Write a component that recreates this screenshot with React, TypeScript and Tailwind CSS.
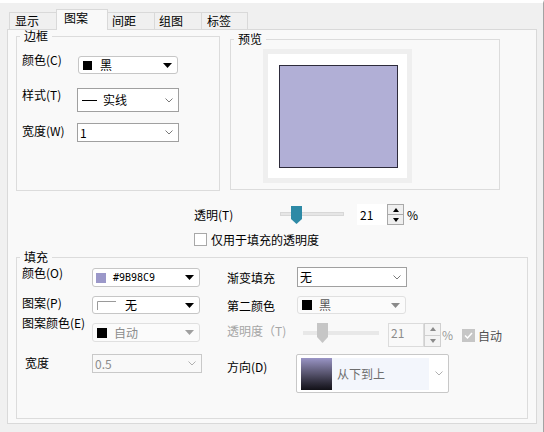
import type { ReactNode } from "react";

const Tri = ({ c = "#000" }: { c?: string }) => (
  <svg width="9" height="5" viewBox="0 0 9 5">
    <path d="M0 0H9L4.5 5Z" fill={c} />
  </svg>
);

const Chev = ({ c = "#7a7a7a" }: { c?: string }) => (
  <svg width="8" height="5" viewBox="0 0 8 5">
    <path d="M0.5 0.5L4 4L7.5 0.5" fill="none" stroke={c} />
  </svg>
);

function Group({ label, className, children }: { label: string; className: string; children?: ReactNode }) {
  return (
    <fieldset className={`border border-[#dcdcdc] ${className}`}>
      <legend className="ml-[3px] px-[4px] leading-[12px]">{label}</legend>
      {children}
    </fieldset>
  );
}

function Spinner({ disabled }: { disabled?: boolean }) {
  const c = disabled ? "#8a8a8a" : "#000";
  const btn = disabled
    ? "flex-1 flex items-center justify-center border border-[#d0d0d0] bg-[#f4f4f4]"
    : "flex-1 flex items-center justify-center border border-[#a9a9a9] bg-[#efefef]";
  return (
    <div className="w-[17px] h-full flex flex-col">
      <div className={btn}>
        <svg width="6" height="4" viewBox="0 0 6 4">
          <path d="M0 4H6L3 0Z" fill={c} />
        </svg>
      </div>
      <div className={`${btn} -mt-px`}>
        <svg width="6" height="4" viewBox="0 0 6 4">
          <path d="M0 0H6L3 4Z" fill={c} />
        </svg>
      </div>
    </div>
  );
}

export default function App() {
  return (
    <div className="w-[544px] h-[432px] overflow-hidden bg-[#f0f0f0] border-t-[3px] border-t-white border-r border-r-[#a3a3a3] font-['Noto_Sans_CJK_SC',sans-serif] text-[12px] leading-[12px] text-black">
      {/* tabs */}
      <div className="flex items-end ml-[9px] mt-[6px] h-[21px] -mb-px">
        <div className="w-[48px] h-[17px] mb-px border-t border-x border-[#d9d9d9] pl-[5px] pt-[2px]">显示</div>
        <div className="relative z-10 -ml-px w-[52px] h-[21px] border-t border-x border-[#d9d9d9] bg-[#f9f9f9] pl-[7px] pt-[2px]">图案</div>
        <div className="-ml-px w-[48px] h-[17px] mb-px border-t border-x border-[#d9d9d9] pl-[4px] pt-[2px]">间距</div>
        <div className="-ml-px w-[48px] h-[17px] mb-px border-t border-x border-[#d9d9d9] pl-[4px] pt-[2px]">组图</div>
        <div className="-ml-px w-[47px] h-[17px] mb-px border-t border-x border-[#d9d9d9] pl-[5px] pt-[2px]">标签</div>
      </div>

      {/* panel */}
      <div className="ml-[7px] w-[530px] h-[395px] border border-[#d9d9d9] bg-[#f9f9f9]">
        <div className="flex items-start">
          <Group label="边框" className="ml-[8px] w-[204px] h-[161px]">
            <div className="flex flex-col pl-[5px]">
              <div className="mt-[14px] flex items-start">
                <span className="w-[56px] -mt-[2px]">颜色(C)</span>
                <div className="w-[100px] h-[18px] flex items-center border border-[#c6c6c6] rounded-[3px] bg-white">
                  <span className="ml-[4px] w-[9px] h-[9px] bg-black" />
                  <span className="ml-[8px]">黑</span>
                  <span className="ml-auto mr-[5px] flex"><Tri /></span>
                </div>
              </div>
              <div className="mt-[14px] flex items-start">
                <span className="w-[55px] mt-[1px]">样式(T)</span>
                <div className="w-[102px] h-[24px] flex items-center border border-[#a0a0a0] bg-white">
                  <span className="ml-[4px] w-[15px] h-px bg-black" />
                  <span className="ml-[6px]">实线</span>
                  <span className="ml-auto mr-[5px] flex"><Chev /></span>
                </div>
              </div>
              <div className="mt-[11px] flex items-start">
                <span className="w-[55px] mt-[2px]">宽度(W)</span>
                <div className="w-[102px] h-[19px] flex items-center border border-[#a0a0a0] bg-white">
                  <span className="ml-[2px]">1</span>
                  <span className="ml-auto mr-[5px] flex"><Chev /></span>
                </div>
              </div>
            </div>
          </Group>

          <Group label="预览" className="ml-[10px] mt-[3px] w-[270px] h-[157px]">
            <div className="ml-[32px] mt-[4px] w-[149px] h-[134px] bg-[#efefef] p-[5px]">
              <div className="w-full h-full bg-white pl-[11px] pt-[11px]">
                <div className="w-[119px] h-[103px] border border-[#2d2b3b] bg-[#b1afd6]" />
              </div>
            </div>
          </Group>
        </div>

        {/* transparency */}
        <div className="mt-[13px] ml-[186px] h-[21px] flex items-center">
          <span className="w-[86px]">透明(T)</span>
          <div className="relative w-[64px] h-[21px]">
            <div className="absolute left-0 right-0 top-[8px] h-[4px] bg-[#e6e6e6] border border-[#d8d8d8]" />
            <svg className="absolute left-[11px] top-[2px]" width="11" height="18" viewBox="0 0 11 18">
              <path d="M0 0H11V13L5.5 18L0 13Z" fill="#2e8aa6" />
            </svg>
          </div>
          <div className="ml-[13px] w-[30px] h-full bg-white flex items-center pl-[3px]">21</div>
          <Spinner />
          <span className="ml-[3px]">%</span>
        </div>
        <div className="mt-[8px] ml-[186px] flex items-center">
          <span className="w-[13px] h-[13px] border border-[#a8a8a8] bg-white" />
          <span className="ml-[4px]">仅用于填充的透明度</span>
        </div>

        {/* fill */}
        <Group label="填充" className="mt-[5px] ml-[8px] w-[512px] h-[168px]">
          <div className="flex flex-col pl-[5px]">
            {/* row A */}
            <div className="mt-[4px] flex items-start">
              <div className="w-[205px] flex items-start">
                <span className="w-[70px]">颜色(O)</span>
                <div className="mt-[1px] w-[108px] h-[19px] flex items-center border border-[#c6c6c6] rounded-[3px] bg-white">
                  <span className="ml-[3px] w-[10px] h-[10px] bg-[#9b98c9]" />
                  <span className="ml-[7px] font-['DejaVu_Sans_Mono',monospace] text-[10px]">#9B98C9</span>
                  <span className="ml-auto mr-[5px] flex"><Tri /></span>
                </div>
              </div>
              <span className="w-[70px] mt-[5px]">渐变填充</span>
              <div className="w-[110px] h-[20px] flex items-center border border-[#a0a0a0] bg-white">
                <span className="ml-[2px]">无</span>
                <span className="ml-auto mr-[5px] flex"><Chev /></span>
              </div>
            </div>

            {/* row B */}
            <div className="mt-[9px] flex items-start">
              <div className="w-[205px] flex items-start">
                <span className="w-[70px] mt-[1px]">图案(P)</span>
                <div className="w-[108px] h-[18px] flex items-center border border-[#c6c6c6] rounded-[3px] bg-white">
                  <svg className="ml-[4px]" width="19" height="9" viewBox="0 0 19 9">
                    <path d="M0.5 9V0.5H19" fill="none" stroke="#9a9a9a" />
                  </svg>
                  <span className="ml-[9px]">无</span>
                  <span className="ml-auto mr-[5px] flex"><Tri /></span>
                </div>
              </div>
              <span className="w-[70px] mt-[4px]">第二颜色</span>
              <div className="w-[109px] h-[18px] flex items-center border border-[#e0e0e0] rounded-[3px] bg-[#fbfbfb]">
                <span className="ml-[4px] w-[10px] h-[10px] bg-black" />
                <span className="ml-[7px] text-[#555]">黑</span>
                <span className="ml-auto mr-[5px] flex"><Tri c="#8a8a8a" /></span>
              </div>
            </div>

            {/* row C */}
            <div className="mt-[4px] flex items-start">
              <div className="w-[205px] flex items-start">
                <span className="w-[70px] -mt-px whitespace-nowrap">图案颜色(E)</span>
                <div className="mt-[5px] w-[108px] h-[19px] flex items-center border border-[#e0e0e0] rounded-[3px] bg-[#fbfbfb]">
                  <span className="ml-[4px] w-[10px] h-[10px] bg-black" />
                  <span className="ml-[7px] text-[#8c8c8c]">自动</span>
                  <span className="ml-auto mr-[5px] flex"><Tri c="#a0a0a0" /></span>
                </div>
              </div>
              <span className="w-[76px] mt-[7px] text-[#a6a6a6]">透明度（T)</span>
              <div className="mt-[5px] h-[24px] flex items-start">
                <div className="relative w-[76px] h-[24px]">
                  <div className="absolute left-0 right-0 top-[8px] h-[4px] bg-[#e8e8e8]" />
                  <svg className="absolute left-[14px] top-0" width="11" height="20" viewBox="0 0 11 20">
                    <path d="M0 0H11V14L5.5 20L0 14Z" fill="#c6c6c6" />
                  </svg>
                </div>
                <div className="ml-[9px] w-[36px] h-full border border-[#dcdcdc] bg-[#f9f9f9] pl-[2px] pt-[3px] text-[#8c8c8c]">21</div>
                <Spinner disabled />
                <span className="ml-px w-[12px] mt-[6px] text-[#9a9a9a]">%</span>
                <span className="ml-[8px] mt-[6px] w-[13px] h-[13px] bg-[#c6c6c6] flex">
                  <svg width="13" height="13" viewBox="0 0 13 13">
                    <path d="M3 6.5L5.5 9L10 4" fill="none" stroke="#fff" strokeWidth="1.5" />
                  </svg>
                </span>
                <span className="ml-[3px] mt-[7px] text-[#505050]">自动</span>
              </div>
            </div>

            {/* row D */}
            <div className="mt-[7px] flex items-start">
              <div className="w-[205px] flex items-start">
                <span className="ml-[3px] w-[67px] mt-[3px]">宽度</span>
                <div className="w-[110px] h-[19px] flex items-center border border-[#c9c9c9] bg-[#f9f9f9]">
                  <span className="ml-[2px] text-[#8c8c8c]">0.5</span>
                  <span className="ml-auto mr-[5px] flex"><Chev c="#b0b0b0" /></span>
                </div>
              </div>
              <span className="w-[69px] mt-[7px]">方向(D)</span>
              <div className="w-[153px] h-[39px] flex items-center border border-[#c8c8c8] rounded-[2px] bg-white">
                <span className="ml-[4px] w-[31px] h-[32px] bg-linear-to-b from-[#9a95c6] via-[#55526b] to-[#121118]" />
                <span className="w-[97px] h-[32px] bg-[#f3f6fc] flex items-center pl-[5px] text-[#6e6e6e]">从下到上</span>
                <span className="ml-auto mr-[5px] flex"><Chev c="#b0b0b0" /></span>
              </div>
            </div>
          </div>
        </Group>
      </div>
    </div>
  );
}
